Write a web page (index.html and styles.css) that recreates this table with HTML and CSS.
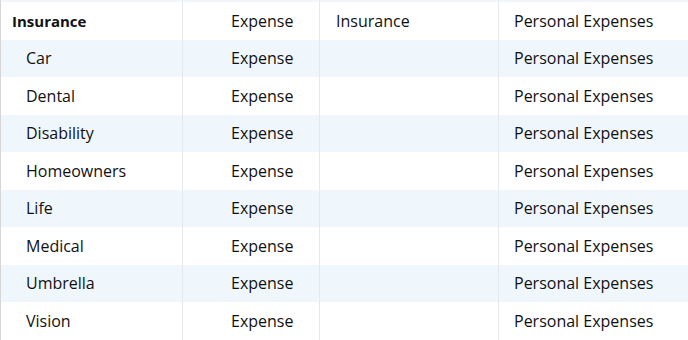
FILE: index.html
```html
<!DOCTYPE html>
<html>
<head>
<meta charset="utf-8">
<link rel="stylesheet" href="styles.css">
</head>
<body>
<div class="table">
  <div class="row strip"><div class="cell c1"></div><div class="cell c2"></div><div class="cell c3"></div><div class="cell c4"></div></div>
  <div class="row"><div class="cell c1 parent">Insurance</div><div class="cell c2">Expense</div><div class="cell c3">Insurance</div><div class="cell c4">Personal Expenses</div></div>
  <div class="row alt"><div class="cell c1 child">Car</div><div class="cell c2">Expense</div><div class="cell c3"></div><div class="cell c4">Personal Expenses</div></div>
  <div class="row"><div class="cell c1 child">Dental</div><div class="cell c2">Expense</div><div class="cell c3"></div><div class="cell c4">Personal Expenses</div></div>
  <div class="row alt"><div class="cell c1 child">Disability</div><div class="cell c2">Expense</div><div class="cell c3"></div><div class="cell c4">Personal Expenses</div></div>
  <div class="row"><div class="cell c1 child">Homeowners</div><div class="cell c2">Expense</div><div class="cell c3"></div><div class="cell c4">Personal Expenses</div></div>
  <div class="row alt"><div class="cell c1 child">Life</div><div class="cell c2">Expense</div><div class="cell c3"></div><div class="cell c4">Personal Expenses</div></div>
  <div class="row"><div class="cell c1 child">Medical</div><div class="cell c2">Expense</div><div class="cell c3"></div><div class="cell c4">Personal Expenses</div></div>
  <div class="row alt"><div class="cell c1 child">Umbrella</div><div class="cell c2">Expense</div><div class="cell c3"></div><div class="cell c4">Personal Expenses</div></div>
  <div class="row"><div class="cell c1 child">Vision</div><div class="cell c2">Expense</div><div class="cell c3"></div><div class="cell c4">Personal Expenses</div></div>
</div>
</body>
</html>
```
FILE: styles.css
```css
html, body {
  margin: 0;
  padding: 0;
  background: #ffffff;
}
.table {
  width: 688px;
  height: 340px;
  overflow: hidden;
  border-left: 1px solid #d6d6d6;
  box-sizing: border-box;
  font-family: "Open Sans", "Noto Sans", sans-serif;
  font-size: 16px;
  color: #111111;
}
.row {
  display: grid;
  grid-template-columns: 182px 137px 179px 1fr;
  height: 37.5px;
  align-items: stretch;
  background: #ffffff;
}
.row.alt, .row.strip {
  background: #eff7fc;
}
.row.strip {
  height: 2px;
}
.cell {
  display: flex;
  align-items: center;
  white-space: nowrap;
  border-right: 1px solid #e6e9ec;
  overflow: hidden;
}
.cell.c4 {
  border-right: none;
}
.parent {
  padding-left: 11px;
  font-weight: 700;
  font-size: 15px;
}
.child {
  padding-left: 25px;
}
.c2 {
  padding-left: 48px;
}
.c3 {
  padding-left: 16px;
}
.c4 {
  padding-left: 15px;
}
```
